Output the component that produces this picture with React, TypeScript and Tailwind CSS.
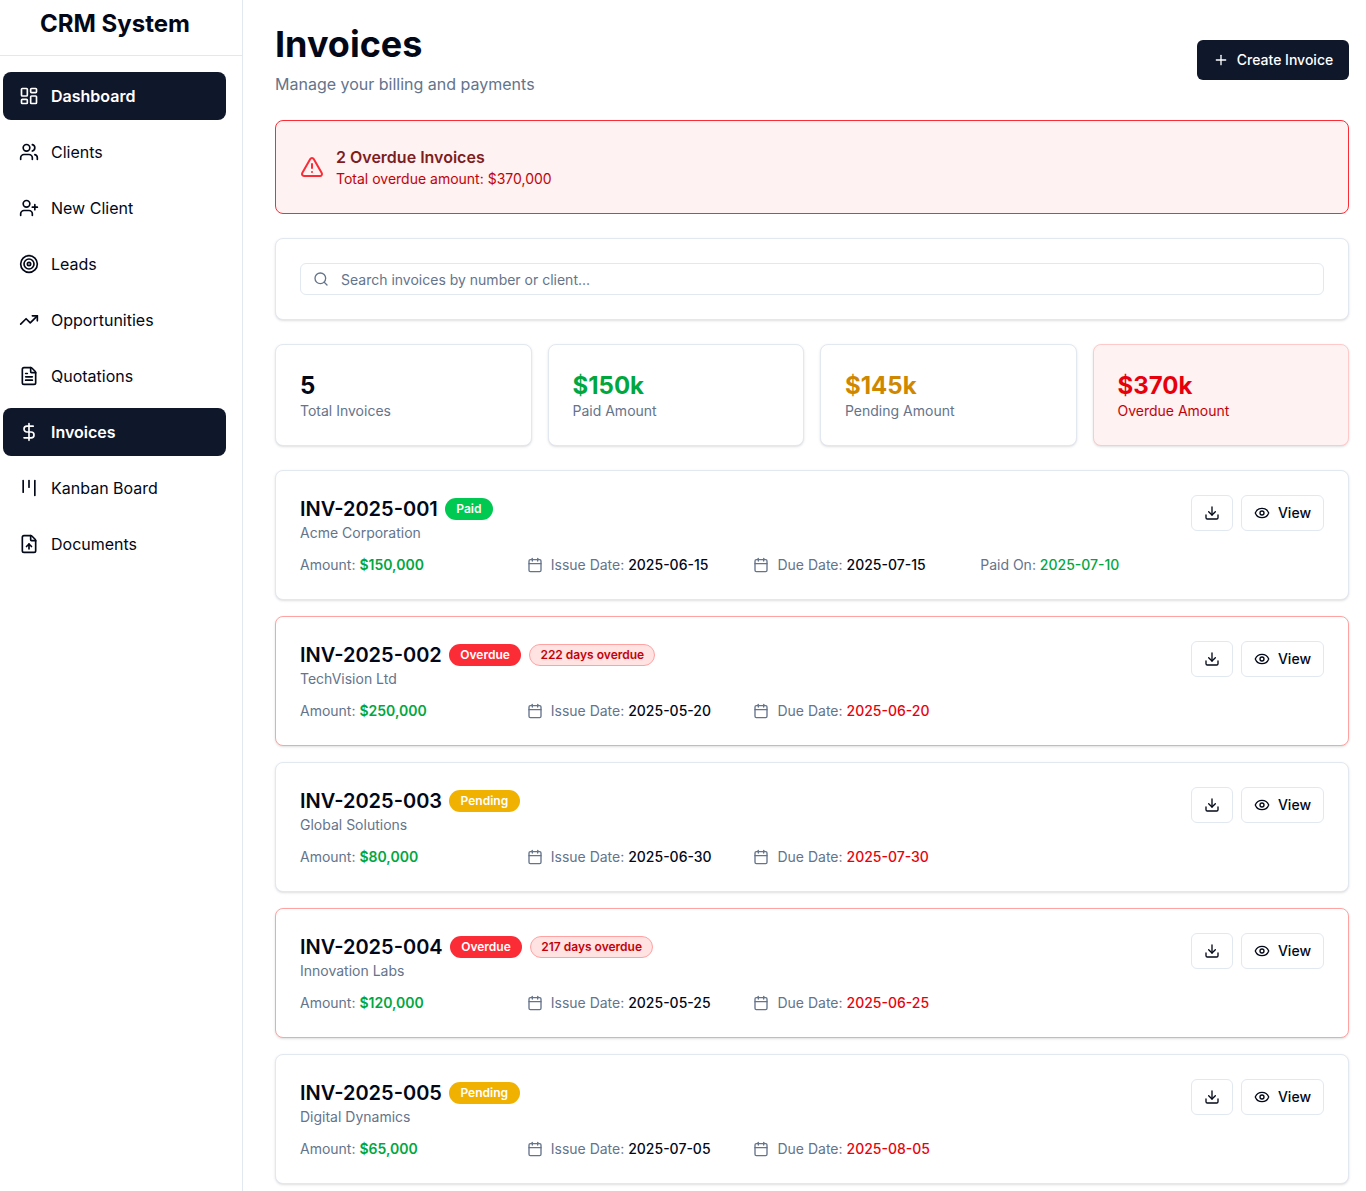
import {
	Calendar,
	DollarSign,
	Download,
	Eye,
	FileText,
	FileUp,
	Kanban,
	LayoutDashboard,
	Plus,
	Search,
	Target,
	TrendingUp,
	TriangleAlert,
	UserPlus,
	Users,
} from 'lucide-react';

const navItems = [
	{ label: 'Dashboard', Icon: LayoutDashboard, active: true },
	{ label: 'Clients', Icon: Users },
	{ label: 'New Client', Icon: UserPlus },
	{ label: 'Leads', Icon: Target },
	{ label: 'Opportunities', Icon: TrendingUp },
	{ label: 'Quotations', Icon: FileText },
	{ label: 'Invoices', Icon: DollarSign, active: true },
	{ label: 'Kanban Board', Icon: Kanban },
	{ label: 'Documents', Icon: FileUp },
];

const stats = [
	{ value: '5', label: 'Total Invoices', valueClass: 'text-[#020817]', labelClass: 'text-[#64748b]', cardClass: 'bg-white border-slate-200' },
	{ value: '$150k', label: 'Paid Amount', valueClass: 'text-green-600', labelClass: 'text-[#64748b]', cardClass: 'bg-white border-slate-200' },
	{ value: '$145k', label: 'Pending Amount', valueClass: 'text-yellow-600', labelClass: 'text-[#64748b]', cardClass: 'bg-white border-slate-200' },
	{ value: '$370k', label: 'Overdue Amount', valueClass: 'text-red-600', labelClass: 'text-red-700', cardClass: 'bg-red-50 border-red-200' },
];

type Invoice = {
	id: string;
	client: string;
	amount: string;
	issued: string;
	due: string;
	status: 'Paid' | 'Overdue' | 'Pending';
	overdueDays?: number;
	paidOn?: string;
};

const invoices: Invoice[] = [
	{ id: 'INV-2025-001', client: 'Acme Corporation', amount: '$150,000', issued: '2025-06-15', due: '2025-07-15', status: 'Paid', paidOn: '2025-07-10' },
	{ id: 'INV-2025-002', client: 'TechVision Ltd', amount: '$250,000', issued: '2025-05-20', due: '2025-06-20', status: 'Overdue', overdueDays: 222 },
	{ id: 'INV-2025-003', client: 'Global Solutions', amount: '$80,000', issued: '2025-06-30', due: '2025-07-30', status: 'Pending' },
	{ id: 'INV-2025-004', client: 'Innovation Labs', amount: '$120,000', issued: '2025-05-25', due: '2025-06-25', status: 'Overdue', overdueDays: 217 },
	{ id: 'INV-2025-005', client: 'Digital Dynamics', amount: '$65,000', issued: '2025-07-05', due: '2025-08-05', status: 'Pending' },
];

const statusClass = {
	Paid: 'bg-green-500',
	Overdue: 'bg-red-500',
	Pending: 'bg-yellow-500',
};

function Sidebar() {
	return (
		<aside className="w-[243px] shrink-0 border-r border-slate-200 bg-white">
			<div className="flex h-[56px] items-start border-b border-slate-200 pl-10 pt-2">
				<h1 className="text-2xl font-bold text-[#020817]">CRM System</h1>
			</div>
			<nav className="ml-[3px] mr-4 flex flex-col gap-2 pt-4">
				{navItems.map(({ label, Icon, active }) => (
					<a
						key={label}
						className={
							active
								? 'flex h-12 items-center gap-3 rounded-lg bg-slate-900 px-4 font-semibold text-white'
								: 'flex h-12 items-center gap-3 rounded-lg px-4 text-[#020817]'
						}
					>
						<Icon size={20} />
						<span>{label}</span>
					</a>
				))}
			</nav>
		</aside>
	);
}

function InvoiceCard({ invoice }: { invoice: Invoice }) {
	const isOverdue = invoice.status === 'Overdue';

	return (
		<div
			className={
				isOverdue
					? 'flex h-[130px] items-start justify-between rounded-lg border border-red-300 bg-white p-6 shadow-sm'
					: 'flex h-[130px] items-start justify-between rounded-lg border border-slate-200 bg-white p-6 shadow-sm'
			}
		>
			<div className="flex-1">
				<div className="flex h-7 items-center">
					<h3 className="mr-[7px] text-xl font-semibold text-[#020817]">{invoice.id}</h3>
					<span className={`flex h-[22px] items-center rounded-full px-[11.5px] text-xs font-semibold text-white ${statusClass[invoice.status]}`}>
						{invoice.status}
					</span>
					{invoice.overdueDays && (
						<span className="ml-2 flex h-[22px] items-center rounded-full border border-red-300 bg-red-100 px-2.5 text-xs font-semibold text-red-700">
							{invoice.overdueDays} days overdue
						</span>
					)}
				</div>
				<p className="text-sm leading-5 text-[#64748b]">{invoice.client}</p>
				<div className="mt-3 grid grid-cols-4 gap-4 text-sm">
					<div className="leading-5">
						<span className="text-[#64748b]">Amount: </span>
						<span className="font-semibold text-green-600">{invoice.amount}</span>
					</div>
					<div className="flex items-center gap-2">
						<Calendar size={16} className="text-[#64748b]" />
						<span>
							<span className="text-[#64748b]">Issue Date: </span>
							<span className="font-medium text-[#020817]">{invoice.issued}</span>
						</span>
					</div>
					<div className="flex items-center gap-2">
						<Calendar size={16} className="text-[#64748b]" />
						<span>
							<span className="text-[#64748b]">Due Date: </span>
							<span className={invoice.status === 'Paid' ? 'font-medium text-[#020817]' : 'font-medium text-red-600'}>{invoice.due}</span>
						</span>
					</div>
					{invoice.paidOn && (
						<div className="leading-5">
							<span className="text-[#64748b]">Paid On: </span>
							<span className="font-medium text-green-600">{invoice.paidOn}</span>
						</div>
					)}
				</div>
			</div>
			<div className="flex gap-2">
				<button className="flex h-9 items-center justify-center rounded-md border border-slate-200 bg-white px-3 text-[#020817]">
					<Download size={16} />
				</button>
				<button className="flex h-9 items-center justify-center gap-2 rounded-md border border-slate-200 bg-white px-3 text-sm font-medium text-[#020817]">
					<Eye size={16} />
					View
				</button>
			</div>
		</div>
	);
}

export default function App() {
	return (
		<div className="flex min-h-[1191px] bg-white font-['Inter',sans-serif]">
			<Sidebar />
			<main className="min-w-0 flex-1 pb-[7px] pl-8 pr-[17px]">
				<div className="flex h-[96px] items-start justify-between">
					<div className="pt-[20px]">
						<h2 className="text-4xl leading-[48px] font-bold text-[#020817]">Invoices</h2>
						<p className="mt-1 text-[#64748b]">Manage your billing and payments</p>
					</div>
					<button className="mt-10 flex h-10 w-[152px] items-center justify-center gap-2 rounded-md bg-slate-900 text-sm font-medium text-white">
						<Plus size={16} />
						Create Invoice
					</button>
				</div>

				<div className="mt-6 flex h-[94px] items-center gap-3 rounded-lg border border-red-500 bg-red-50 px-6">
					<TriangleAlert size={24} className="text-red-500" />
					<div>
						<h3 className="font-semibold leading-6 text-[#7f1d1d]">2 Overdue Invoices</h3>
						<p className="text-sm leading-5 text-red-700">Total overdue amount: $370,000</p>
					</div>
				</div>

				<div className="mt-6 rounded-lg border border-slate-200 bg-white p-6 shadow-sm">
					<div className="flex h-8 items-center gap-3 rounded-md border border-slate-200 bg-white px-3">
						<Search size={16} className="text-[#64748b]" />
						<span className="pt-0.5 text-sm text-[#64748b]">Search invoices by number or client...</span>
					</div>
				</div>

				<div className="mt-6 grid grid-cols-4 gap-4">
					{stats.map((stat) => (
						<div key={stat.label} className={`h-[102px] rounded-lg border px-6 pt-[25px] shadow-sm ${stat.cardClass}`}>
							<div className={`text-2xl leading-8 font-bold ${stat.valueClass}`}>{stat.value}</div>
							<div className={`-mt-px text-sm leading-5 ${stat.labelClass}`}>{stat.label}</div>
						</div>
					))}
				</div>

				<div className="mt-6 flex flex-col gap-4">
					{invoices.map((invoice) => (
						<InvoiceCard key={invoice.id} invoice={invoice} />
					))}
				</div>
			</main>
		</div>
	);
}
